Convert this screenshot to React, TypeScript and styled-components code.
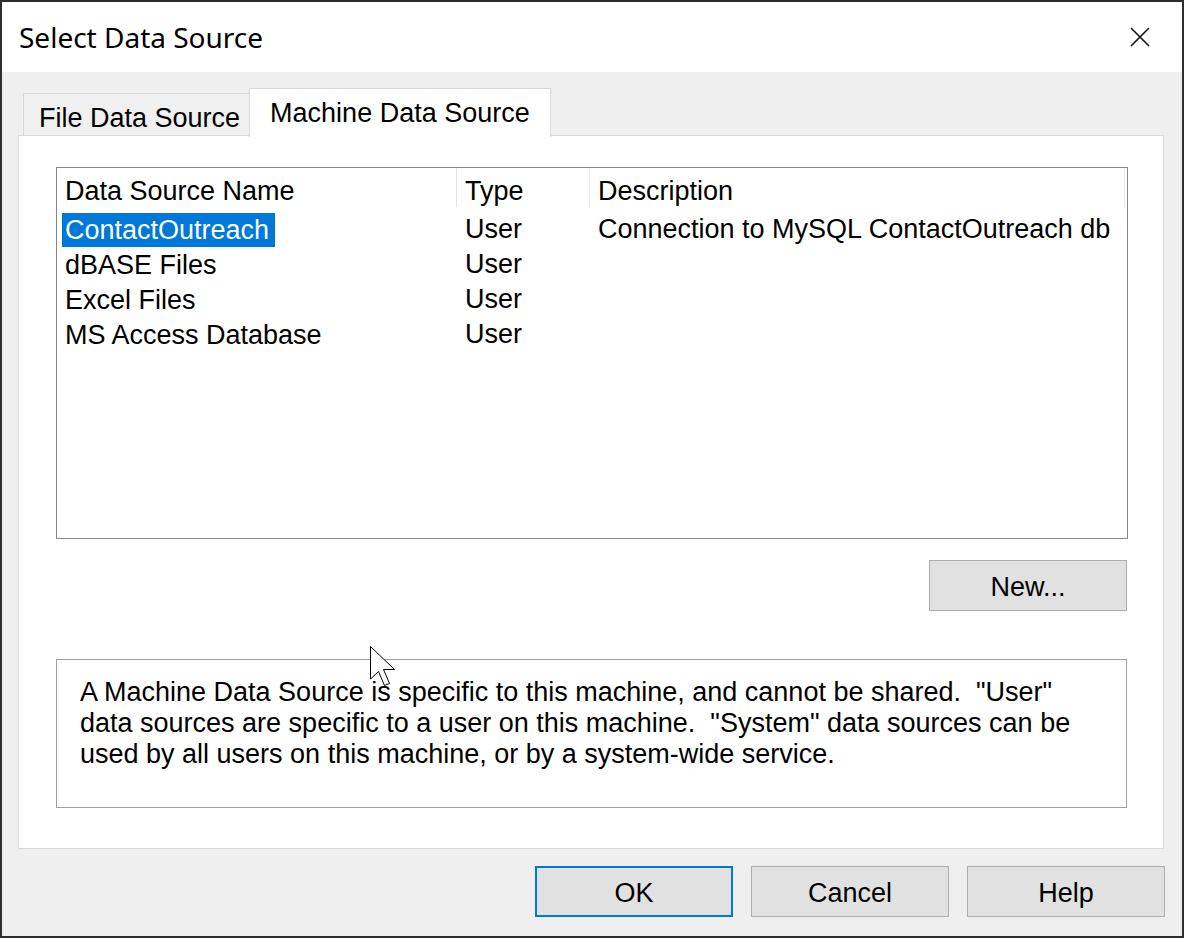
import { FC } from "react";
import styled, { createGlobalStyle } from "styled-components";

const GlobalStyle = createGlobalStyle`
  html, body {
    margin: 0;
    padding: 0;
    background: #efefef;
  }
  * {
    box-sizing: border-box;
  }
`;

type Source = {
  name: string;
  type: string;
  description: string;
  selected?: boolean;
};

const sources: Source[] = [
  {
    name: "ContactOutreach",
    type: "User",
    description: "Connection to MySQL ContactOutreach db",
    selected: true,
  },
  { name: "dBASE Files", type: "User", description: "" },
  { name: "Excel Files", type: "User", description: "" },
  { name: "MS Access Database", type: "User", description: "" },
];

const helpLines = [
  'A Machine Data Source is specific to this machine, and cannot be shared.  "User"',
  'data sources are specific to a user on this machine.  "System" data sources can be',
  "used by all users on this machine, or by a system-wide service.",
];

const CloseIcon: FC = () => (
  <svg width="20" height="20" viewBox="0 0 20 20">
    <path d="M1 1 L19 19 M19 1 L1 19" stroke="#111" strokeWidth="1.6" />
  </svg>
);

const Cursor: FC = () => (
  <CursorWrap>
    <svg width="28" height="42" viewBox="0 0 28 42">
      <path
        d="M0.5 0.5 L0.5 33 L8.5 25.5 L14.5 39.5 L19.5 37.5 L13.5 23.5 L24.5 23.5 Z"
        fill="#fff"
        stroke="#000"
        strokeWidth="1"
        strokeLinejoin="miter"
      />
    </svg>
  </CursorWrap>
);

export default function App() {
  return (
    <>
      <GlobalStyle />
      <Window>
        <TitleBar>
          <Title>Select Data Source</Title>
          <CloseButton>
            <CloseIcon />
          </CloseButton>
        </TitleBar>
        <Body>
          <TabStrip>
            <Tab>File Data Source</Tab>
            <Tab $active>Machine Data Source</Tab>
          </TabStrip>
          <TabPanel>
            <ListBox>
              <ListHeader>
                <HeaderCell $width={400}>Data Source Name</HeaderCell>
                <HeaderCell $width={133}>Type</HeaderCell>
                <HeaderCell $width={535}>Description</HeaderCell>
              </ListHeader>
              {sources.map((s) => (
                <ListRow key={s.name}>
                  <Cell $width={400}>
                    <NameText $selected={s.selected}>{s.name}</NameText>
                  </Cell>
                  <Cell $width={133}>{s.type}</Cell>
                  <Cell $width={535}>{s.description}</Cell>
                </ListRow>
              ))}
            </ListBox>
            <NewRow>
              <DialogButton>New...</DialogButton>
            </NewRow>
            <HelpBox>
              {helpLines.map((line) => (
                <HelpLine key={line}>{line}</HelpLine>
              ))}
            </HelpBox>
          </TabPanel>
          <ButtonRow>
            <DialogButton $default>OK</DialogButton>
            <DialogButton>Cancel</DialogButton>
            <DialogButton>Help</DialogButton>
          </ButtonRow>
        </Body>
        <Cursor />
      </Window>
    </>
  );
}

const Window = styled.div`
  position: relative;
  width: 1184px;
  height: 938px;
  border: 2px solid #2e2e2e;
  background: #efefef;
  display: flex;
  flex-direction: column;
  font-family: "Liberation Sans", Arial, sans-serif;
  font-size: 27px;
  color: #000;
  overflow: hidden;
`;

const TitleBar = styled.div`
  height: 70px;
  background: #fff;
  display: flex;
  align-items: center;
  justify-content: space-between;
  padding: 0 32px 0 17px;
`;

const Title = styled.div`
  font-family: "Noto Sans", "Open Sans", sans-serif;
  font-size: 28px;
  color: #000;
`;

const CloseButton = styled.div`
  width: 20px;
  height: 20px;
  display: flex;
`;

const Body = styled.div`
  flex: 1;
  display: flex;
  flex-direction: column;
  padding: 16px 18px 0 16px;
`;

const TabStrip = styled.div`
  display: flex;
  align-items: flex-end;
  height: 48px;
  padding-left: 5px;
  margin-bottom: -1px;
  position: relative;
  z-index: 1;
`;

const Tab = styled.div<{ $active?: boolean }>`
  height: ${(p) => (p.$active ? 49 : 43)}px;
  margin-bottom: ${(p) => (p.$active ? -1 : 0)}px;
  padding: ${(p) => (p.$active ? "1px 20px 0 20px" : "8px 9px 0 15px")};
  display: flex;
  align-items: center;
  background: ${(p) => (p.$active ? "#fff" : "#f0f0f0")};
  border: 1px solid #d9d9d9;
  border-bottom: ${(p) => (p.$active ? "none" : "1px solid #d9d9d9")};
  margin-left: ${(p) => (p.$active ? -1 : 0)}px;
  white-space: nowrap;
`;

const TabPanel = styled.div`
  height: 714px;
  background: #fff;
  border: 1px solid #d9d9d9;
  padding: 31px 35px 0 37px;
  display: flex;
  flex-direction: column;
`;

const ListBox = styled.div`
  height: 372px;
  border: 1px solid #828790;
  display: flex;
  flex-direction: column;
`;

const ListHeader = styled.div`
  display: flex;
  height: 44px;
`;

const HeaderCell = styled.div<{ $width: number }>`
  width: ${(p) => p.$width}px;
  height: 39px;
  padding: 7px 0 0 8px;
  display: flex;
  align-items: center;
  border-right: 1px solid #e5e5e5;
  white-space: nowrap;
`;

const ListRow = styled.div`
  display: flex;
  height: 35px;
  align-items: center;
`;

const Cell = styled.div<{ $width: number }>`
  width: ${(p) => p.$width}px;
  padding-left: 8px;
  white-space: nowrap;
`;

const NameText = styled.span<{ $selected?: boolean }>`
  display: inline-block;
  margin-left: -3px;
  padding: 3px 6px 3px 3px;
  line-height: 28px;
  background: ${(p) => (p.$selected ? "#0078d7" : "transparent")};
  color: ${(p) => (p.$selected ? "#fff" : "#000")};
`;

const NewRow = styled.div`
  display: flex;
  justify-content: flex-end;
  padding: 21px 1px 0 0;
`;

const DialogButton = styled.div<{ $default?: boolean }>`
  width: 198px;
  height: 51px;
  display: flex;
  align-items: center;
  justify-content: center;
  padding-top: 4px;
  background: #e1e1e1;
  border: ${(p) => (p.$default ? "2px solid #0078d7" : "1px solid #adadad")};
`;

const HelpBox = styled.div`
  margin: 48px 1px 0 0;
  height: 149px;
  border: 1px solid #a0a0a0;
  padding: 17px 0 0 23px;
`;

const HelpLine = styled.div`
  line-height: 31px;
  white-space: pre;
`;

const ButtonRow = styled.div`
  display: flex;
  justify-content: flex-end;
  gap: 18px;
  padding: 17px 0 0 0;
  margin-right: -1px;
`;

const CursorWrap = styled.div`
  position: absolute;
  left: 368px;
  top: 644px;
  width: 28px;
  height: 42px;
  pointer-events: none;
`;
